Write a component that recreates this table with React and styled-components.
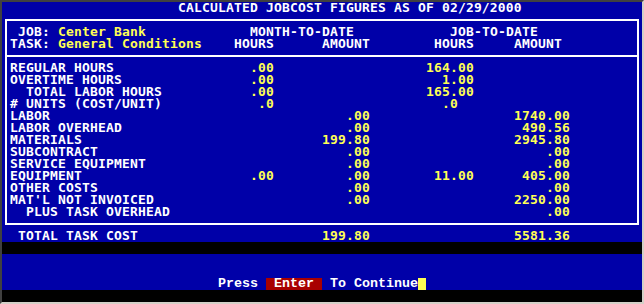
import React from "react"
import styled, { createGlobalStyle } from "styled-components"

const BLUE = "#0000a8"
const YELLOW = "#ffff54"
const WHITE = "#ffffff"

const GlobalStyle = createGlobalStyle`
  html, body {
    margin: 0;
    padding: 0;
    background: #c0c0c0;
  }
`

const rows = [
  { label: "REGULAR HOURS", vals: [[".00", 33], ["164.00", 58]] },
  { label: "OVERTIME HOURS", vals: [[".00", 33], ["1.00", 58]] },
  { label: "TOTAL LABOR HOURS", indent: true, vals: [[".00", 33], ["165.00", 58]] },
  { label: "# UNITS (COST/UNIT)", vals: [[".0", 33], [".0", 56]] },
  { label: "LABOR", vals: [[".00", 45], ["1740.00", 70]] },
  { label: "LABOR OVERHEAD", vals: [[".00", 45], ["490.56", 70]] },
  { label: "MATERIALS", vals: [["199.80", 45], ["2945.80", 70]] },
  { label: "SUBCONTRACT", vals: [[".00", 45], [".00", 70]] },
  { label: "SERVICE EQUIPMENT", vals: [[".00", 45], [".00", 70]] },
  {
    label: "EQUIPMENT",
    vals: [[".00", 33], [".00", 45], ["11.00", 58], ["405.00", 70]],
  },
  { label: "OTHER COSTS", vals: [[".00", 45], [".00", 70]] },
  { label: "MAT'L NOT INVOICED", vals: [[".00", 45], ["2250.00", 70]] },
  { label: "PLUS TASK OVERHEAD", indent: true, vals: [[".00", 70]] },
]

const Text = ({ col, children, yellow }) => (
  <Cell $col={col} $len={children.length} $yellow={yellow}>
    {children}
  </Cell>
)

// right aligned: last character sits in column `end`
const Num = ({ end, children }) => (
  <Text col={end - children.length + 1} yellow>
    {children}
  </Text>
)

const App = () => (
  <>
    <GlobalStyle />
    <Frame>
      <Screen>
        <Line>
          <Text col={22}>CALCULATED JOBCOST FIGURES AS OF 02/29/2000</Text>
        </Line>
        <Box>
          <Header>
            <Line $inset>
              <Text col={2}>JOB:</Text>
              <Text col={7} yellow>Center Bank</Text>
              <Text col={31}>MONTH-TO-DATE</Text>
              <Text col={56}>JOB-TO-DATE</Text>
            </Line>
            <Line $inset>
              <Text col={1}>TASK:</Text>
              <Text col={7} yellow>General Conditions</Text>
              <Text col={29}>HOURS</Text>
              <Text col={40}>AMOUNT</Text>
              <Text col={54}>HOURS</Text>
              <Text col={64}>AMOUNT</Text>
            </Line>
          </Header>
          <Body>
            {rows.map(row => (
              <Line $inset key={row.label}>
                <Text col={row.indent ? 3 : 1}>{row.label}</Text>
                {row.vals.map(([v, end]) => (
                  <Num key={end} end={end}>
                    {v}
                  </Num>
                ))}
              </Line>
            ))}
          </Body>
        </Box>
        <Line>
          <Text col={2}>TOTAL TASK COST</Text>
          <Num end={45}>199.80</Num>
          <Num end={70}>5581.36</Num>
        </Line>
        <BlackBar />
        <Blank />
        <Prompt>
          <Text col={27}>Press</Text>
          <Field>{" Enter "}</Field>
          <Text col={41}>To Continue</Text>
          <Cursor />
        </Prompt>
        <BlackBar />
      </Screen>
    </Frame>
  </>
)

export default App

const Frame = styled.div`
  width: 640px;
  height: 300px;
  border-style: solid;
  border-width: 2px;
  border-color: #404040 #d4d0c8 #d4d0c8 #404040;
`
const Screen = styled.div`
  width: 640px;
  height: 300px;
  background: ${BLUE};
  display: flex;
  flex-direction: column;
  font-family: "DejaVu Sans Mono", "Liberation Mono", monospace;
  font-weight: 700;
  font-size: 13px;
  letter-spacing: 0.17px;
  line-height: 12px;
  overflow: hidden;
`
const Line = styled.div`
  display: grid;
  grid-template-columns: repeat(80, 8px);
  grid-template-rows: 12px;
  height: 12px;
  margin: 0 ${p => (p.$inset ? "-5px" : "0")};
`
const Cell = styled.span`
  grid-row: 1;
  grid-column: ${p => p.$col + 1} / span ${p => p.$len};
  color: ${p => (p.$yellow ? YELLOW : WHITE)};
  white-space: pre;
`
const Box = styled.div`
  margin: 5px 3px;
  border: 2px solid ${WHITE};
  display: flex;
  flex-direction: column;
`
const Header = styled.div`
  padding: 5px 0;
  border-bottom: 2px solid ${WHITE};
`
const Body = styled.div`
  padding: 5px 0;
`
const BlackBar = styled.div`
  height: 12px;
  background: #000;
`
const Blank = styled.div`
  height: 24px;
`
const Prompt = styled(Line)`
  font-family: "Liberation Mono", "Courier New", monospace;
  font-size: 13.33px;
  letter-spacing: 0;
`
const Field = styled.span`
  grid-row: 1;
  grid-column: 34 / span 7;
  background: #a80000;
  color: ${WHITE};
  white-space: pre;
`
const Cursor = styled.span`
  grid-row: 1;
  grid-column: 53 / span 1;
  background: ${YELLOW};
`
